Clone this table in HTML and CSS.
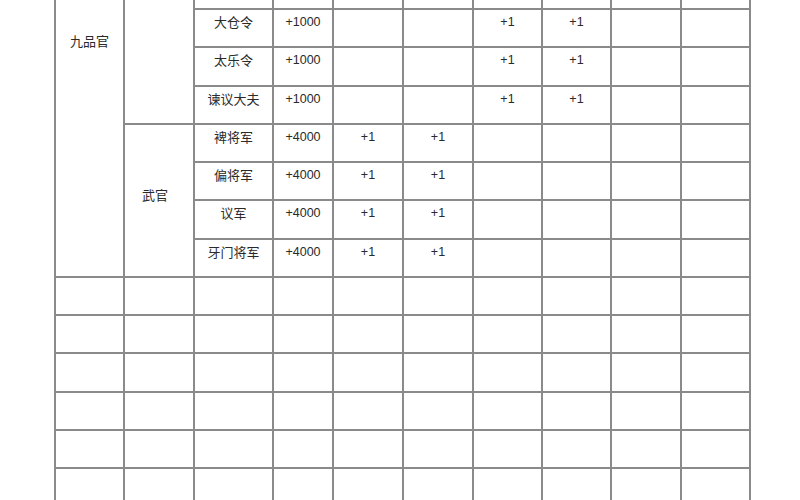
FILE: index.html
```html
<!DOCTYPE html>
<html lang="zh">
<head>
<meta charset="utf-8">
<link rel="stylesheet" href="styles.css">
</head>
<body>
<div class="sheet">
<table class="grid">
<colgroup>
<col class="c69"><col class="c70"><col class="c79"><col class="c60"><col class="c70"><col class="c70"><col class="c69"><col class="c69"><col class="c70"><col class="c69">
</colgroup>
<tbody>
<tr class="cut">
<td rowspan="8" class="rank cn">九品官</td>
<td rowspan="4"></td>
<td></td><td></td><td></td><td></td><td></td><td></td><td></td><td></td>
</tr>
<tr>
<td class="cn">大仓令</td><td class="num">+1000</td><td></td><td></td><td class="num">+1</td><td class="num">+1</td><td></td><td></td>
</tr>
<tr>
<td class="cn">太乐令</td><td class="num">+1000</td><td></td><td></td><td class="num">+1</td><td class="num">+1</td><td></td><td></td>
</tr>
<tr>
<td class="cn">谏议大夫</td><td class="num">+1000</td><td></td><td></td><td class="num">+1</td><td class="num">+1</td><td></td><td></td>
</tr>
<tr>
<td rowspan="4" class="group cn">武官</td>
<td class="cn">裨将军</td><td class="num">+4000</td><td class="num">+1</td><td class="num">+1</td><td></td><td></td><td></td><td></td>
</tr>
<tr>
<td class="cn">偏将军</td><td class="num">+4000</td><td class="num">+1</td><td class="num">+1</td><td></td><td></td><td></td><td></td>
</tr>
<tr>
<td class="cn">议军</td><td class="num">+4000</td><td class="num">+1</td><td class="num">+1</td><td></td><td></td><td></td><td></td>
</tr>
<tr>
<td class="cn">牙门将军</td><td class="num">+4000</td><td class="num">+1</td><td class="num">+1</td><td></td><td></td><td></td><td></td>
</tr>
<tr><td></td><td></td><td></td><td></td><td></td><td></td><td></td><td></td><td></td><td></td></tr>
<tr><td></td><td></td><td></td><td></td><td></td><td></td><td></td><td></td><td></td><td></td></tr>
<tr><td></td><td></td><td></td><td></td><td></td><td></td><td></td><td></td><td></td><td></td></tr>
<tr><td></td><td></td><td></td><td></td><td></td><td></td><td></td><td></td><td></td><td></td></tr>
<tr><td></td><td></td><td></td><td></td><td></td><td></td><td></td><td></td><td></td><td></td></tr>
<tr><td></td><td></td><td></td><td></td><td></td><td></td><td></td><td></td><td></td><td></td></tr>
</tbody>
</table>
</div>
</body>
</html>
```
FILE: styles.css
```css
html, body {
  margin: 0;
  padding: 0;
  background: #ffffff;
}
body {
  width: 800px;
  height: 500px;
  overflow: hidden;
}
.sheet {
  height: 500px;
  overflow: hidden;
  padding-left: 54px;
}
.grid {
  border-collapse: collapse;
  table-layout: fixed;
  width: 697px;
  color: #2a2a2a;
}
.c69 { width: 69px; }
.c70 { width: 70px; }
.c79 { width: 79px; }
.c60 { width: 60px; }
.grid tr {
  height: 38.25px;
}
.grid tr.cut {
  height: 9px;
}
.grid td {
  border: 2px solid #8a8a8a;
  padding: 4px 0 0;
  vertical-align: top;
  text-align: center;
  line-height: 16px;
  white-space: nowrap;
  overflow: hidden;
}
.grid tr.cut td {
  border-top: none;
  padding: 0;
}
.cn {
  font-family: "Noto Sans CJK SC", "Noto Sans CJK JP", sans-serif;
  font-size: 13px;
}
.num {
  font-family: "Liberation Sans", Arial, sans-serif;
  font-size: 12.5px;
}
.grid tr.cut td.rank {
  padding-top: 33px;
}
.grid td.group {
  vertical-align: middle;
  padding: 0 8px 10px 0;
}
```
